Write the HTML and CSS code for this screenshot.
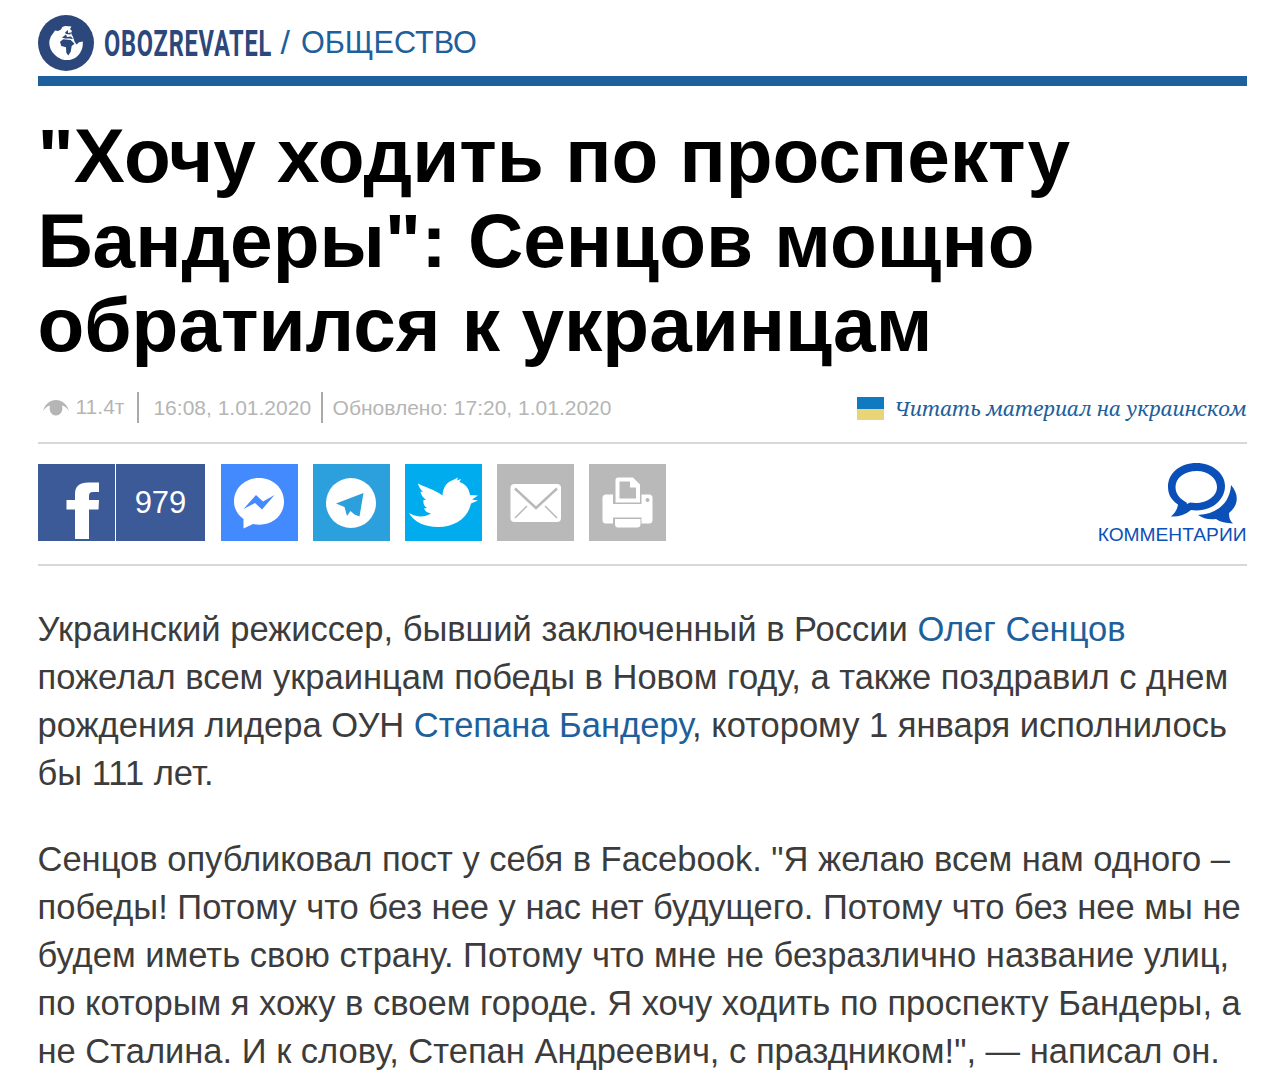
FILE: index.html
```html
<!DOCTYPE html>
<html lang="ru">
<head>
    <meta charset="UTF-8">
    <meta name="viewport" content="width=device-width, initial-scale=1.0">
    <title>"Хочу ходить по проспекту Бандеры": Сенцов мощно обратился к украинцам</title>
    <link rel="stylesheet" href="styles.css">
</head>
<body>

<div class="container">
    <!-- Header -->
    <header class="header">
        <a class="logo" href="#">
            <svg class="globe" viewBox="0 0 56 56">
                <circle cx="28" cy="28" r="28" fill="#2b477c"/>
                <path fill="#fff" d="M24.300 12 L27 11 L33.500 11.500 L32 14 L34 16 L33 18 L35 22 L36.700 27 L38.700 29.500 L41 27.300 L44.800 26.500 C45 30 44.500 34 42.700 36.700 C40 42 35 45 29.300 45 C25 45.500 20 43 17 40 C13 36.500 11.300 32 11.300 28 C11.300 24 13.500 20 15 18.500 L17 15.500 L20 16 L23 14.500 Z"/>
                <path fill="#2b477c" d="M22 26.700 L25.300 24.300 L32.700 25 L36.500 28.800 L33.700 31 L32.700 36.700 L30.300 40.500 L28.300 37.700 L28 32.300 L23.300 31 Z M24 22.500 L28 19.500 L29 22 L33 21.500 L35 24 L31 23.500 L27 23.500 Z M27 17.500 L30 15 L30 18 L33 17.500 L32.500 19.500 L28 19 Z"/>
            </svg>
            <svg class="brand" viewBox="0 0 170 44">
                <text x="0" y="35" textLength="168" lengthAdjust="spacingAndGlyphs">OBOZREVATEL</text>
            </svg>
        </a>
        <span class="slash">/</span>
        <a class="section" href="#">ОБЩЕСТВО</a>
    </header>

    <h1 class="title">
        "Хочу ходить по проспекту<br>
        Бандеры": Сенцов мощно<br>
        обратился к украинцам
    </h1>

    <!-- Date, views, language -->
    <div class="meta">
        <svg class="eye" viewBox="0 0 26 18">
            <path fill="#b5b5b5" d="M0 12 C2 5 7 1 13 1 C19 1 24 5 26 12 C24 9 22 7.500 19 6.500 C20.500 12 17.500 16.500 13 16.500 C8.500 16.500 5.500 12 7 6.500 C4 7.500 2 9 0 12 Z"/>
        </svg>
        <span class="views">11.4т</span>
        <span class="date">16:08, 1.01.2020</span>
        <span class="updated">Обновлено: 17:20, 1.01.2020</span>
        <a class="lang" href="#"><i class="flag"></i><span>Читать материал на украинском</span></a>
    </div>

    <!-- Share buttons -->
    <div class="share">
        <a class="btn fb" href="#">
            <svg viewBox="0 0 77 77"><path fill="#fff" d="M37 75 V45.500 H28.500 V36 H37 V30 C37 22 42 18.500 50 18.500 H61 V28 H55 C52 28 51 29.500 51 32 V36 H61 L60.500 45.500 H51 V75 Z"/></svg>
        </a>
        <span class="count">979</span>
        <a class="btn messenger" href="#">
            <svg viewBox="0 0 77 77">
                <path fill="#fff" d="M38 14 C24 14 13 24 13 37.500 C13 45 17 51 22.500 55 V64.500 L32 60 C49 63.500 63 53 63 37.500 C63 24 52 14 38 14 Z"/>
                <path fill="#448aff" d="M22.500 45 L35 31 L42 37.500 L53.500 31 L41 45.500 L34 39 Z"/>
            </svg>
        </a>
        <a class="btn telegram" href="#">
            <svg viewBox="0 0 77 77">
                <circle cx="38" cy="39" r="25" fill="#fff"/>
                <path fill="#2ca0dc" d="M23 39.500 L50.500 29 L46.500 52.500 L41.500 50.500 L37.500 47 L34 52 L31.500 43 Z"/>
            </svg>
        </a>
        <a class="btn twitter" href="#">
            <svg viewBox="0 0 77 77"><path fill="#fff" d="M13 19.500 C19 23 29 25 37.500 31.500 C38 23 42 18 48 16 L53 13.500 L52 16.500 L56 15 L54.500 18 C60 19.500 64 24 65 31 L73 31.500 L67 35.500 L73 36.500 L66 39.500 C63 54 50 63 33 63 C20 63 9 58 4 49 C11 53 19 54 26 49.500 C22 49 20 47 19 44.500 L22 44 C19 42 18 39.500 18.500 36 L21 36 C18 33.500 16 31 15.500 27.500 L18 28 C15 25 13.500 22 13 19.500 Z"/></svg>
        </a>
        <a class="btn mail" href="#">
            <svg viewBox="0 0 77 77">
                <rect x="13.500" y="20" width="50.500" height="38" rx="4" fill="#fff"/>
                <path d="M18 24.500 L39 44 L60 24.500" fill="none" stroke="#b9b9b9" stroke-width="2.400"/>
                <path d="M18 54 L30 42 M60 54 L48 42" stroke="#b9b9b9" stroke-width="1.500"/>
            </svg>
        </a>
        <a class="btn print" href="#">
            <svg viewBox="0 0 77 77">
                <rect x="13.500" y="30.500" width="50" height="29" rx="3.500" fill="#fff"/>
                <path fill="#b9b9b9" d="M24 30 H52.500 V40 H24 Z M24 53.500 H52.500 V60 H24 Z"/>
                <path fill="#fff" d="M29 13.500 H44 L51 20.500 V38.500 H26.500 V16 Q26.500 13.500 29 13.500 Z M26 55 H51.500 V60 Q51.500 63.500 48 63.500 H29 Q26 63.500 26 60 Z"/>
                <path fill="#b9b9b9" d="M30.500 17.500 H41 V23.500 H47 V34.500 H30.500 Z"/>
                <circle cx="58.500" cy="36" r="2" fill="#b9b9b9"/>
            </svg>
        </a>
        <a class="comments" href="#">
            <svg viewBox="0 0 72 62">
                <path fill="#0b50b8" d="M65 22 C73 31 73 42 63 50 C63 55 64 58 67 60.500 C60 60 54 59 50 56 C43 57 37 55.500 32 52 C51 51 64 40 65 22 Z"/>
                <path fill="#0b50b8" fill-rule="evenodd" d="M30.500 0 C46 0 59 10 59 23 C59 37 46 47.500 30.500 47.500 L25 47 C19 52 12 54 5 53.500 C9 50 11.500 46 12 41.500 C5 37 2 31 2 24 C2 10 14 0 30.500 0 Z M31 8 C18 8 9.500 15 9.500 24 C9.500 31 14 36 20.500 39.500 L21 41 L24 39.500 C39 42 51 34 51 24 C51 15 42 8 31 8 Z"/>
            </svg>
            <span>КОММЕНТАРИИ</span>
        </a>
    </div>

    <!-- Article -->
    <div class="article">
        <p>
            Украинский режиссер, бывший заключенный в России <a href="#">Олег Сенцов</a><br>
            пожелал всем украинцам победы в Новом году, а также поздравил с днем<br>
            рождения лидера ОУН <a href="#">Степана Бандеру</a>, которому 1 января исполнилось<br>
            бы 111 лет.
        </p>
        <p>
            Сенцов опубликовал пост у себя в Facebook. "Я желаю всем нам одного –<br>
            победы! Потому что без нее у нас нет будущего. Потому что без нее мы не<br>
            будем иметь свою страну. Потому что мне не безразлично название улиц,<br>
            по которым я хожу в своем городе. Я хочу ходить по проспекту Бандеры, а<br>
            не Сталина. И к слову, Степан Андреевич, с праздником!", — написал он.
        </p>
    </div>
</div>

</body>
</html>
```

FILE: styles.css
```css
body {
    font-family: "Liberation Sans", Arial, sans-serif;
    margin: 0;
    padding: 0;
    background-color: #fff;
    overflow: hidden;
}
a {
    color: #1d609b;
    text-decoration: none;
}
svg {
    display: block;
}
.container {
    width: 1209px;
    margin: 0 auto 0 37.5px;
}
.header {
    display: flex;
    align-items: center;
    box-sizing: border-box;
    height: 86px;
    border-bottom: 10px solid #1d609b;
    padding-top: 9px;
    white-space: nowrap;
}
.logo {
    display: flex;
    align-items: center;
}
.globe {
    width: 56px;
    height: 56px;
}
.brand {
    width: 170px;
    height: 44px;
    margin-left: 10px;
}
.brand text {
    font-family: Roboto, sans-serif;
    font-weight: 700;
    font-size: 37px;
    letter-spacing: 1.2px;
    fill: #2b477c;
}
.slash {
    font-size: 34px;
    line-height: 34px;
    color: #1d609b;
    margin-left: 7px;
    margin-top: -2px;
}
.section {
    font-size: 30.6px;
    line-height: 34px;
    margin-left: 11px;
    margin-top: -1px;
}
.title {
    font-size: 76.6px;
    line-height: 84.6px;
    margin: 28px 0 0;
    color: #000;
    white-space: nowrap;
}
.meta {
    display: flex;
    align-items: center;
    box-sizing: border-box;
    height: 72px;
    margin-top: 4px;
    padding-top: 2px;
    border-bottom: 2px solid #d8d8d8;
    color: #b5b5b5;
    font-size: 21px;
    line-height: 31px;
    white-space: nowrap;
}
.eye {
    width: 26px;
    height: 18px;
    margin-left: 5px;
}
.views {
    margin-left: 7px;
    margin-top: -2px;
}
.date {
    margin-left: 13px;
    padding-left: 14px;
    border-left: 2px solid #aaa;
}
.updated {
    margin-left: 9.5px;
    padding-left: 10px;
    border-left: 2px solid #aaa;
}
.lang {
    display: flex;
    align-items: center;
    margin-left: auto;
    padding-top: 2px;
    font-family: "Noto Serif", Georgia, "Liberation Serif", serif;
    font-style: italic;
    font-size: 20.5px;
}
.flag {
    width: 27px;
    height: 23px;
    margin-right: 10px;
    background: linear-gradient(#0f7ac0 50%, #e9d477 50%);
}
.share {
    display: flex;
    align-items: center;
    box-sizing: border-box;
    height: 122px;
    padding-bottom: 2px;
    border-bottom: 2px solid #d8d8d8;
}
.btn {
    width: 77px;
    height: 77px;
    margin-right: 15px;
}
.fb {
    background-color: #3c5a98;
    margin-right: 1.5px;
}
.count {
    width: 89px;
    height: 77px;
    line-height: 77px;
    margin-right: 15.5px;
    background-color: #3c5a98;
    color: #fff;
    font-size: 31px;
    text-align: center;
}
.messenger {
    background-color: #448aff;
}
.telegram {
    background-color: #2ca0dc;
}
.twitter {
    background-color: #00aced;
}
.mail, .print {
    background-color: #b9b9b9;
}
.comments {
    margin-left: auto;
    padding-top: 3px;
    color: #0b50b8;
    font-size: 19.2px;
    line-height: 20px;
}
.comments svg {
    width: 72px;
    height: 62px;
    margin: 0 9px 0 auto;
}
.article {
    margin-top: 40px;
    font-size: 34.52px;
    line-height: 47.9px;
    color: #3c3c3c;
    white-space: nowrap;
}
.article p {
    margin: 0 0 38.5px;
}
```
